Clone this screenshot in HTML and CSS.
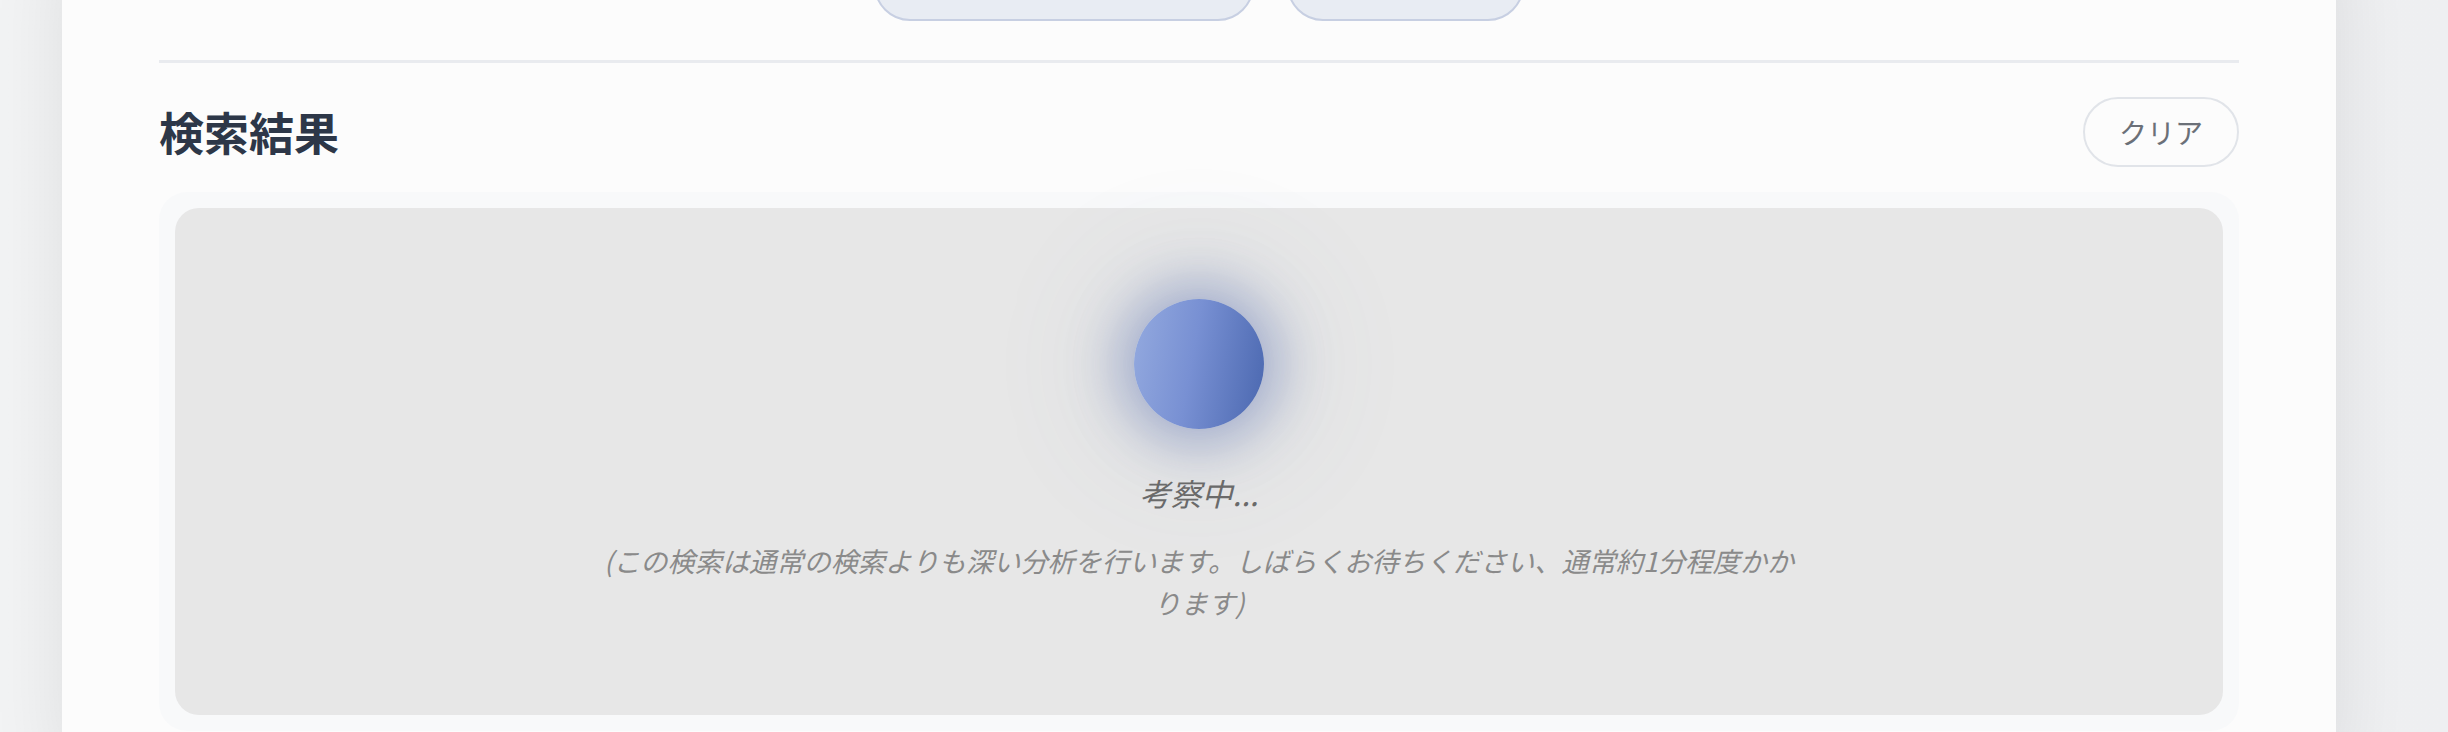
FILE: index.html
```html
<!DOCTYPE html>
<html lang="ja">
<head>
<meta charset="utf-8">
<title>検索結果</title>
<link rel="stylesheet" href="styles.css">
</head>
<body>
<div class="page">
  <main class="card">
    <div class="mode-row">
      <button class="mode-btn mode-btn-wide" type="button"></button>
      <button class="mode-btn mode-btn-narrow" type="button"></button>
    </div>
    <hr class="divider">
    <div class="results-head">
      <h2 class="results-title">検索結果</h2>
      <button class="clear-btn" type="button">クリア</button>
    </div>
    <section class="results-panel">
      <div class="loading-box">
        <div class="spinner-orb"></div>
        <p class="loading-label">考察中...</p>
        <p class="loading-note">(この検索は通常の検索よりも深い分析を行います。しばらくお待ちください、通常約1分程度かかります)</p>
      </div>
    </section>
  </main>
</div>
</body>
</html>
```

FILE: styles.css
```css
* {
  box-sizing: border-box;
}

html, body {
  margin: 0;
  padding: 0;
}

body {
  height: 732px;
  overflow: hidden;
  background: linear-gradient(90deg, #f2f3f4 0%, #eeeff1 100%);
  font-family: "Noto Sans CJK JP", "Noto Sans", sans-serif;
}

.page {
  padding-left: 62px;
  padding-right: 112px;
}

.card {
  margin-top: -51px;
  background: #fcfcfc;
  padding: 0 97px 40px;
  box-shadow: 0 0 70px rgba(0, 0, 0, 0.085);
}

.mode-row {
  display: flex;
  justify-content: center;
  gap: 33px;
}

.mode-btn {
  height: 72px;
  border-radius: 36px;
  background: #e8ecf3;
  border: 2px solid #c7cfe2;
  padding: 0;
}

.mode-btn-wide {
  width: 380px;
}

.mode-btn-narrow {
  width: 237px;
}

.divider {
  margin: 39px 0 0;
  height: 3px;
  border: 0;
  background: #e9ebef;
}

.results-head {
  margin-top: 34px;
  display: flex;
  align-items: center;
  justify-content: space-between;
  height: 70px;
}

.results-title {
  margin: 0;
  font-size: 45px;
  line-height: 1.2;
  font-weight: 700;
  color: #2d3748;
}

.clear-btn {
  height: 70px;
  padding: 0 34px;
  border-radius: 35px;
  border: 2px solid #e1e4e9;
  background: transparent;
  font-family: "Noto Sans CJK JP", "Noto Sans", sans-serif;
  font-size: 28px;
  color: #6b7078;
  line-height: 1;
}

.results-panel {
  margin-top: 25px;
  background: #f8f9fa;
  border-radius: 28px;
  padding: 16px;
}

.loading-box {
  background: #e7e7e7;
  border-radius: 24px;
  padding: 91px 0 92px;
  display: flex;
  flex-direction: column;
  align-items: center;
}

.spinner-orb {
  width: 130px;
  height: 130px;
  border-radius: 50%;
  background: linear-gradient(100deg, #94aadf 0%, #7890d3 45%, #4a67af 100%);
  box-shadow: 0 0 50px 16px rgba(74, 100, 170, 0.4), 0 0 120px 45px rgba(90, 110, 170, 0.08);
}

.loading-label {
  margin: 41px 0 0;
  font-size: 31px;
  line-height: 45px;
  font-style: italic;
  color: #6a6a6a;
}

.loading-note {
  margin: 24px 0 0;
  max-width: 1200px;
  text-align: center;
  font-size: 27.2px;
  line-height: 42px;
  font-style: italic;
  color: #8a8a8a;
}
```
